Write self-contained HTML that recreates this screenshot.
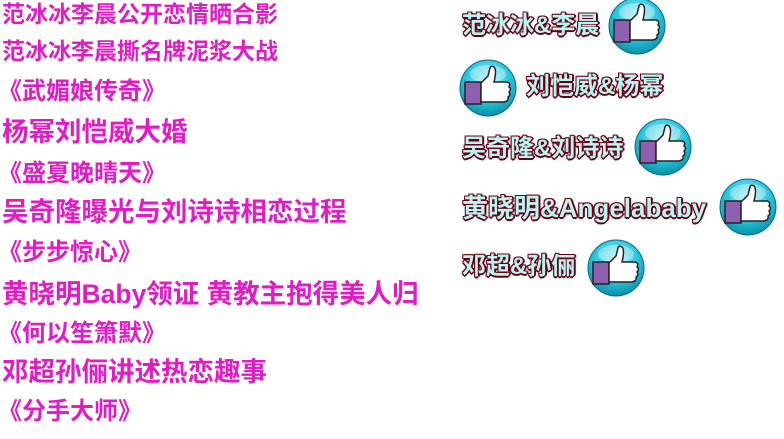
<!DOCTYPE html>
<html><head><meta charset="utf-8"><style>
body{margin:0;width:784px;height:439px;background:#fff;position:relative;overflow:hidden;font-family:"Liberation Sans","Noto Sans CJK SC",sans-serif}
.l{position:absolute;left:2px;color:#e01cc4;font-weight:bold;font-size:26.5px;white-space:nowrap;line-height:1}
.b{font-size:24px;left:-2px}
.r{position:absolute;color:#b8f4f4;font-weight:bold;font-size:24px;white-space:nowrap;line-height:1;
text-shadow:1px 0 #6a0010,-1px 0 #6a0010,0 1px #6a0010,0 -1px #6a0010,1px 1px #6a0010,-1px -1px #6a0010,1px -1px #6a0010,-1px 1px #6a0010,2px 0 #6a0010,0 2px #6a0010}
svg.i{position:absolute;width:60px;height:60px}
</style></head><body>
<svg width="0" height="0" style="position:absolute"><defs>
<radialGradient id="g" cx="50%" cy="35%" r="65%"><stop offset="0" stop-color="#a8f0f8"/><stop offset=".6" stop-color="#28c4dc"/><stop offset="1" stop-color="#0890a8"/></radialGradient>
<symbol id="t" viewBox="-30 -30 60 60">
<circle r="28" fill="url(#g)" stroke="#0a6a80" stroke-width="1"/>
<ellipse cx="0" cy="-14" rx="18" ry="9" fill="#fff" opacity=".35"/>
<rect x="-23" y="-6" width="16" height="22" fill="#9060b0" stroke="#222" stroke-width="1.5"/>
<path d="M-7 -5 L0 -12 L2 -20 Q3 -23 6 -21 Q9 -18 6 -6 L19 -6 Q23 -5 21 -1 Q24 1 21 4 Q23 7 20 9 Q21 13 16 14 L-7 14 Z" fill="#fff" stroke="#222" stroke-width="1.5"/>
</symbol></defs></svg>
<div class="l" style="top:3px;font-size:23px">范冰冰李晨公开恋情晒合影</div>
<div class="l" style="top:40px;font-size:23px">范冰冰李晨撕名牌泥浆大战</div>
<div class="l b" style="top:80px">《武媚娘传奇》</div>
<div class="l" style="top:119px">杨幂刘恺威大婚</div>
<div class="l b" style="top:162px">《盛夏晚晴天》</div>
<div class="l" style="top:199px">吴奇隆曝光与刘诗诗相恋过程</div>
<div class="l b" style="top:241px">《步步惊心》</div>
<div class="l" style="top:281px">黄晓明Baby领证 黄教主抱得美人归</div>
<div class="l b" style="top:322px">《何以笙箫默》</div>
<div class="l" style="top:359px">邓超孙俪讲述热恋趣事</div>
<div class="l b" style="top:400px">《分手大师》</div>

<div class="r" style="left:462px;top:14px">范冰冰&amp;李晨</div>
<svg class="i" style="left:607px;top:-4px"><use href="#t"/></svg>
<svg class="i" style="left:458px;top:58px"><use href="#t"/></svg>
<div class="r" style="left:526px;top:75px">刘恺威&amp;杨幂</div>
<div class="r" style="left:462px;top:137px">吴奇隆&amp;刘诗诗</div>
<svg class="i" style="left:633px;top:117px"><use href="#t"/></svg>
<div class="r" style="left:462px;top:195px;font-size:26px">黄晓明&amp;Angelababy</div>
<svg class="i" style="left:718px;top:177px"><use href="#t"/></svg>
<div class="r" style="left:462px;top:255px">邓超&amp;孙俪</div>
<svg class="i" style="left:586px;top:238px"><use href="#t"/></svg>
</body></html>
